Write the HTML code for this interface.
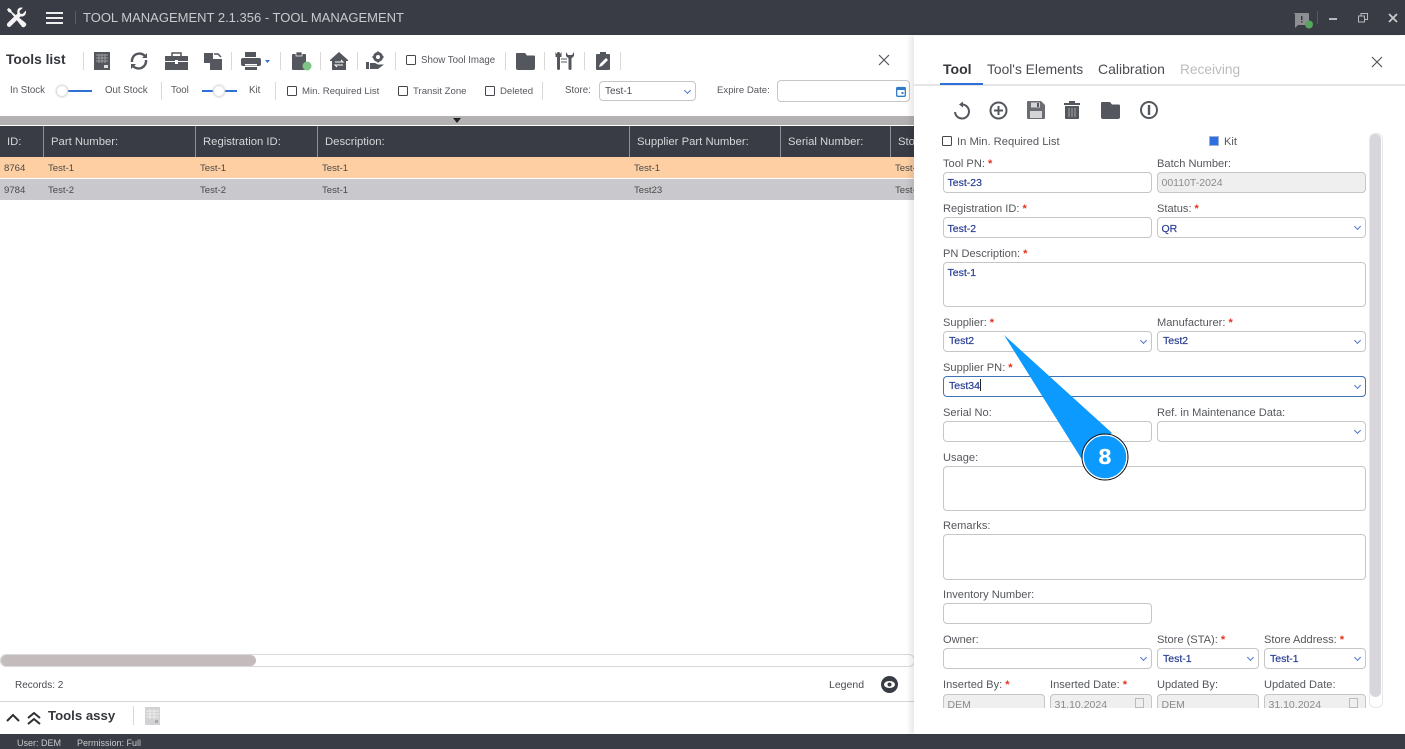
<!DOCTYPE html>
<html><head><meta charset="utf-8"><style>
*{box-sizing:border-box}
html,body{margin:0;padding:0}
body{width:1405px;height:749px;position:relative;overflow:hidden;background:#fff;font-family:"Liberation Sans",sans-serif;color:#4a4c52;font-size:10.5px}
.a{position:absolute;white-space:nowrap}
.h{position:absolute;white-space:nowrap;color:#d5d6d9;font-size:11.3px;top:136px;line-height:13px;padding-top:0}
.c{position:absolute;white-space:nowrap;color:#4a4a4a;font-size:9.6px}
.s{position:absolute;width:1px;background:#d9d9d9}
.cb{position:absolute;width:10px;height:10px;border:1.3px solid #44464c;border-radius:1.5px;background:#fff}
.l{position:absolute;white-space:nowrap;color:#55575c;font-size:11.1px;margin-top:1px}
.l b{color:#e8321e;font-weight:bold;margin-left:3px}
.t{font-size:9.7px;color:#55575c}
.f{position:absolute;border:1px solid #c6c6c6;border-radius:4px;background:#fff;color:#2a3f96;font-size:10.5px;padding:4px 0 0 3.5px;font-weight:normal;height:21px;white-space:nowrap;-webkit-text-stroke:.2px #2a3f96}
.f.dd{padding-left:5px;padding-top:3px}
.f.g{background:#efefef;color:#8b8b8b;-webkit-text-stroke:0}
.f.dd:after{content:"";position:absolute;right:5px;top:6px;width:4px;height:4px;border-right:1.4px solid #4f74c8;border-bottom:1.4px solid #4f74c8;transform:rotate(45deg)}
svg{position:absolute;overflow:visible}
.v{position:absolute;width:1px;background:#8f9196;top:126px;height:31px}
</style></head><body>
<!-- title bar -->
<div class="a" style="left:0;top:0;width:1405px;height:35px;background:#393c44"></div>
<svg style="left:6px;top:7px" width="21" height="21" viewBox="0 0 21 21"><path d="M2.500 1 L5 2.500 L6 5 L18.500 15 Q21 16.500 20 18.500 L18.500 20 Q16.500 21 15 18.500 L5 6 L2.500 5 L1 2.500Z" fill="#f4f4f4"/><path d="M20 3.500 L16.500 7 L14 6.500 L13.500 4 L17 .8 Q13 -.5 11.500 3 Q11 5.500 11.500 6.500 L1.500 16 Q.2 18 1.800 19.500 Q3.500 20.700 5 19 L14.500 9.500 Q20.500 10 20 3.500Z" fill="#f4f4f4"/></svg>
<div class="a" style="left:46px;top:12px;width:17px;height:2px;background:#eee"></div>
<div class="a" style="left:46px;top:17px;width:17px;height:2px;background:#eee"></div>
<div class="a" style="left:46px;top:22px;width:17px;height:2px;background:#eee"></div>
<div class="a" style="left:75px;top:11px;width:1px;height:13px;background:#5a5d64"></div>
<div class="a" style="left:83px;top:10px;color:#c9cace;font-size:13px">TOOL MANAGEMENT 2.1.356 - TOOL MANAGEMENT</div>
<svg style="left:1294px;top:13px" width="20" height="16" viewBox="0 0 20 16"><path d="M0 1 Q0 0 1 0 H14 Q15 0 15 1 V11 Q15 12 14 12 H4 L1 15 V1Z" fill="#8e8f93"/><rect x="7" y="3" width="1.500" height="4" fill="#393c44"/><rect x="7" y="8" width="1.500" height="1.500" fill="#393c44"/><circle cx="15" cy="11.500" r="4" fill="#56a55c"/></svg>
<div class="a" style="left:1317px;top:11px;width:1px;height:13px;background:#55585e"></div>
<div class="a" style="left:1329px;top:18px;width:8px;height:2px;background:#b8b9bc"></div>
<svg style="left:1358px;top:13px" width="10" height="10" viewBox="0 0 10 10" fill="none" stroke="#b8b9bc"><rect x=".5" y="3" width="6" height="6"/><path d="M3 3V.5H9.500V6.500H6.500"/></svg>
<svg style="left:1388px;top:13px" width="10" height="10" viewBox="0 0 10 10" stroke="#c8c9cc" stroke-width="1.800"><path d="M1 1L9 9M9 1L1 9"/></svg>

<!-- toolbar row 1 -->
<div class="a" style="left:6px;top:52px;font-size:13.8px;font-weight:bold;color:#34363c">Tools list</div>
<div class="s" style="left:83px;top:52px;height:18px"></div>
<svg style="left:94px;top:52px" width="16" height="18" viewBox="0 0 16 18"><rect width="16" height="18" fill="#55575e"/><path d="M2 3H14M2 6H14M2 9H14M5 2V11M8 2V11M11 2V11" stroke="#9a9ba0" stroke-width="1"/><rect x="10" y="13" width="4" height="3" fill="#ddd"/></svg>
<svg style="left:129px;top:51px" width="20" height="20" viewBox="0 0 20 20" fill="none" stroke="#55575e" stroke-width="2.400"><path d="M3 11A7.500 7.500 0 0 1 16 5"/><path d="M17 9A7.500 7.500 0 0 1 4 15"/><path d="M18 2V7H13Z" fill="#55575e" stroke="none"/><path d="M2 18V13H7Z" fill="#55575e" stroke="none"/></svg>
<svg style="left:165px;top:52px" width="23" height="18" viewBox="0 0 23 18"><path d="M7 4V1H16V4" fill="none" stroke="#55575e" stroke-width="1.500"/><rect y="4" width="23" height="5" fill="#55575e"/><rect y="10" width="23" height="8" fill="#55575e"/><rect x="10" y="8" width="3" height="4" fill="#fff"/></svg>
<svg style="left:204px;top:52px" width="18" height="18" viewBox="0 0 18 18" fill="#55575e"><rect y="1" width="9" height="10"/><rect x="6" y="7" width="12" height="11"/><path d="M10 2H14L17 5" fill="none" stroke="#55575e" stroke-width="1.500"/></svg>
<div class="s" style="left:231px;top:52px;height:18px"></div>
<svg style="left:241px;top:52px" width="28" height="18" viewBox="0 0 28 18"><rect x="4" y="0" width="11" height="5" fill="#55575e"/><rect y="6" width="20" height="8" rx="2" fill="#55575e"/><rect x="4" y="12" width="12" height="1.500" fill="#fff"/><rect x="4" y="15" width="12" height="3" fill="#55575e"/><path d="M24 8H29L26.500 11Z" fill="#2e6fd8"/></svg>
<div class="s" style="left:280px;top:52px;height:18px"></div>
<svg style="left:292px;top:51px" width="20" height="20" viewBox="0 0 20 20"><rect y="3" width="14" height="16" rx="1" fill="#55575e"/><rect x="4" y="1" width="6" height="4" fill="#55575e" stroke="#fff" stroke-width=".7"/><circle cx="15" cy="15" r="4.500" fill="#7dc486"/></svg>
<div class="s" style="left:320px;top:52px;height:18px"></div>
<svg style="left:330px;top:52px" width="18" height="18" viewBox="0 0 18 18"><path d="M9 0L18 8V9H16V18H2V9H0V8Z" fill="#55575e"/><path d="M5 10H13L11 8M13 13H5L7 15" stroke="#fff" stroke-width="1" fill="none"/></svg>
<div class="s" style="left:357px;top:52px;height:18px"></div>
<svg style="left:366px;top:51px" width="20" height="19" viewBox="0 0 20 19"><circle cx="12" cy="6" r="3.500" fill="none" stroke="#55575e" stroke-width="3"/><path d="M12 .5V2M12 10V11.500M6.500 6H8M16 6H17.500" stroke="#55575e" stroke-width="2"/><path d="M0 11H3V18H0ZM4 12H9L12 13.500H18L12 18H4Z" fill="#55575e"/></svg>
<div class="s" style="left:395px;top:52px;height:18px"></div>
<div class="cb" style="left:406px;top:55px"></div>
<div class="a t" style="left:421px;top:55px">Show Tool Image</div>
<div class="s" style="left:505px;top:52px;height:18px"></div>
<svg style="left:516px;top:52px" width="19" height="18" viewBox="0 0 19 18"><path d="M1 1H9L11 3.500H18Q19 3.500 19 5V7H0V2Q0 1 1 1Z" fill="#55575e"/><path d="M0 6.500H9L10.500 5H19V16Q19 18 17 18H2Q0 18 0 16Z" fill="#55575e"/></svg>
<div class="s" style="left:544px;top:52px;height:18px"></div>
<svg style="left:555px;top:52px" width="19" height="18" viewBox="0 0 19 18" fill="#55575e"><rect x="2" y="0" width="3" height="18" rx="1.500"/><path d="M0.500 0V5H6.500V0L5 2H2Z"/><rect x="13.500" y="6" width="3" height="12" rx="1.500"/><path d="M11 0V4L15 8L19 4V0L17 3H13Z"/><path d="M6 7H12M6 10H12" stroke="#55575e"/></svg>
<div class="s" style="left:584px;top:52px;height:18px"></div>
<svg style="left:596px;top:52px" width="14" height="18" viewBox="0 0 14 18"><rect y="2" width="14" height="16" rx="1" fill="#55575e"/><rect x="4" y="0" width="6" height="4" fill="#55575e"/><path d="M3 15L4 12L10 6L12 8L6 14Z" fill="#fff"/></svg>
<div class="s" style="left:620px;top:52px;height:18px"></div>
<svg style="left:879px;top:55px" width="10" height="10" viewBox="0 0 10 10" stroke="#55575c" stroke-width="1.200"><path d="M0 0L10 10M10 0L0 10"/></svg>

<!-- toolbar row 2 -->
<div class="a t" style="left:10px;top:85px">In Stock</div>
<div class="a" style="left:62px;top:90px;width:30px;height:2px;background:#2e6fd8"></div>
<div class="a" style="left:56px;top:85px;width:12px;height:12px;border-radius:50%;background:#fff;border:1px solid #e0e0e0;box-shadow:0 0 2px #ccc"></div>
<div class="a t" style="left:105px;top:85px">Out Stock</div>
<div class="s" style="left:161px;top:82px;height:18px"></div>
<div class="a t" style="left:171px;top:85px">Tool</div>
<div class="a" style="left:202px;top:90px;width:35px;height:2px;background:#2e6fd8"></div>
<div class="a" style="left:213px;top:85px;width:12px;height:12px;border-radius:50%;background:#fff;border:1px solid #e0e0e0;box-shadow:0 0 2px #ccc"></div>
<div class="a t" style="left:249px;top:85px">Kit</div>
<div class="s" style="left:275px;top:82px;height:18px"></div>
<div class="cb" style="left:287px;top:86px"></div><div class="a t" style="left:302px;top:86px;font-size:9.6px">Min. Required List</div>
<div class="cb" style="left:398px;top:86px"></div><div class="a t" style="left:413px;top:86px;font-size:9.6px">Transit Zone</div>
<div class="cb" style="left:485px;top:86px"></div><div class="a t" style="left:500px;top:86px;font-size:9.6px">Deleted</div>
<div class="s" style="left:542px;top:82px;height:18px"></div>
<div class="a t" style="left:565px;top:85px">Store:</div>
<div class="f dd" style="left:599px;top:81px;width:97px;height:20px;color:#4a4c52;font-size:10px;-webkit-text-stroke:0;padding-top:4px">Test-1</div>
<div class="a t" style="left:717px;top:85px;font-size:9.6px">Expire Date:</div>
<div class="f" style="left:777px;top:80px;width:133px;height:22px"></div>
<svg style="left:896px;top:86px" width="10" height="11" viewBox="0 0 10 11"><rect x=".7" y="1.500" width="8.600" height="8.800" rx="1" fill="#fff" stroke="#2e7bc8" stroke-width="1.300"/><rect x="1" y="1.500" width="8" height="2.500" fill="#2e7bc8"/><rect x="5.500" y="6" width="2" height="2" fill="#2e7bc8"/></svg>

<!-- grid -->
<div class="a" style="left:0;top:116px;width:914px;height:9px;background:#b3b1b1"></div>
<svg style="left:453px;top:118px" width="8" height="5" viewBox="0 0 8 5"><path d="M0 0H8L4 5Z" fill="#222"/></svg>
<div class="a" style="left:0;top:126px;width:914px;height:31px;background:#393c44"></div>
<div class="v" style="left:43px"></div><div class="v" style="left:195px"></div><div class="v" style="left:317px"></div><div class="v" style="left:629px"></div><div class="v" style="left:780px"></div><div class="v" style="left:890px"></div>
<div class="h" style="left:7px">ID:</div>
<div class="h" style="left:51px">Part Number:</div>
<div class="h" style="left:203px">Registration ID:</div>
<div class="h" style="left:325px">Description:</div>
<div class="h" style="left:637px">Supplier Part Number:</div>
<div class="h" style="left:788px">Serial Number:</div>
<div class="h" style="left:898px">Sto</div>
<div class="a" style="left:0;top:157px;width:914px;height:21px;background:#fdcfa3"></div>
<div class="a" style="left:0;top:179px;width:914px;height:21px;background:#c9c8cc"></div>
<div class="c" style="left:4px;top:163px">8764</div><div class="c" style="left:48px;top:163px">Test-1</div><div class="c" style="left:200px;top:163px">Test-1</div><div class="c" style="left:322px;top:163px">Test-1</div><div class="c" style="left:634px;top:163px">Test-1</div><div class="c" style="left:895px;top:163px">Test-</div>
<div class="c" style="left:4px;top:185px">9784</div><div class="c" style="left:48px;top:185px">Test-2</div><div class="c" style="left:200px;top:185px">Test-2</div><div class="c" style="left:322px;top:185px">Test-1</div><div class="c" style="left:634px;top:185px">Test23</div><div class="c" style="left:895px;top:185px">Test-</div>

<!-- bottom of list -->
<div class="a" style="left:0;top:654px;width:915px;height:13px;border:1px solid #d9d9d9;border-radius:6px"></div>
<div class="a" style="left:1px;top:655px;width:255px;height:11px;background:#c4bcbc;border-radius:6px"></div>
<div class="a" style="left:15px;top:680px;font-size:10px">Records: 2</div>
<div class="a" style="left:829px;top:679px;font-size:10.5px">Legend</div>
<svg style="left:881px;top:676px" width="17" height="17" viewBox="0 0 17 17"><circle cx="8.500" cy="8.500" r="8.500" fill="#393c44"/><ellipse cx="8.500" cy="8.500" rx="5.500" ry="3.500" fill="#fff"/><circle cx="8.500" cy="8.500" r="2" fill="#393c44"/></svg>
<div class="a" style="left:0;top:701px;width:914px;height:1px;background:#d5d5d5"></div>
<svg style="left:6px;top:711px" width="36" height="15" viewBox="0 0 36 15" fill="none" stroke="#2c2e33" stroke-width="2"><path d="M1 10L7 4L13 10"/><path d="M22 7L28 2L34 7M22 13L28 8L34 13"/></svg>
<div class="a" style="left:48px;top:708px;font-size:13.2px;font-weight:bold;color:#34363c">Tools assy</div>
<div class="s" style="left:133px;top:706px;height:19px"></div>
<svg style="left:145px;top:707px" width="15" height="18" viewBox="0 0 15 18"><rect width="15" height="18" fill="#d2d2d4"/><path d="M1 4H14M1 7H14M1 10H14M5 2V12M9 2V12" stroke="#eee"/><rect x="10" y="13" width="3" height="3" fill="#aaa"/></svg>

<!-- status bar -->
<div class="a" style="left:0;top:734px;width:1405px;height:15px;background:#393c44"></div>
<div class="a" style="left:17px;top:738px;font-size:9px;color:#c9cace">User: DEM</div>
<div class="a" style="left:77px;top:738px;font-size:9px;color:#c9cace">Permission: Full</div>

<!-- right panel -->
<div class="a" style="left:914px;top:36px;width:491px;height:698px;background:#fff;box-shadow:-4px 0 5px rgba(0,0,0,.09)"></div>
<div class="a" style="left:943px;top:61px;font-size:14px;font-weight:bold;color:#34363c">Tool</div>
<div class="a" style="left:987px;top:62px;font-size:13.8px;color:#4a4c52">Tool's Elements</div>
<div class="a" style="left:1098px;top:61px;font-size:14px;color:#4a4c52">Calibration</div>
<div class="a" style="left:1180px;top:62px;font-size:13.7px;color:#bcbcbc">Receiving</div>
<div class="a" style="left:914px;top:84px;width:491px;height:2px;background:#e6e6e6"></div>
<div class="a" style="left:940px;top:83px;width:43px;height:2px;background:#2e6fd8"></div>
<svg style="left:1372px;top:57px" width="10" height="10" viewBox="0 0 10 10" stroke="#55575c" stroke-width="1.200"><path d="M0 0L10 10M10 0L0 10"/></svg>

<svg style="left:952px;top:101px" width="19" height="19" viewBox="0 0 19 19" fill="none" stroke="#55575e" stroke-width="2"><path d="M10 3.500A7 7 0 1 1 3 11"/><path d="M11 .5L7 3.500L11 6.500Z" fill="#55575e" stroke="none"/></svg>
<svg style="left:989px;top:101px" width="19" height="19" viewBox="0 0 19 19" fill="none" stroke="#55575e" stroke-width="2"><circle cx="9.500" cy="9.500" r="8"/><path d="M5 9.500H14M9.500 5V14"/></svg>
<svg style="left:1027px;top:101px" width="18" height="18" viewBox="0 0 18 18"><path d="M1 0H14L18 4V17Q18 18 17 18H1Q0 18 0 17V1Q0 0 1 0Z" fill="#6a6c72"/><rect x="4" y="1.500" width="9" height="5" fill="#d4d4d6"/><rect x="10" y="2" width="2" height="4" fill="#55575e"/><rect x="3" y="10" width="12" height="7" fill="#d4d4d6"/></svg>
<svg style="left:1064px;top:101px" width="16" height="18" viewBox="0 0 16 18" fill="#55575e"><rect y="2" width="16" height="2"/><rect x="5" y="0" width="6" height="3"/><path d="M1 5H15V17Q15 18 14 18H2Q1 18 1 17Z"/><path d="M5 7V16M8 7V16M11 7V16" stroke="#aaa"/></svg>
<svg style="left:1101px;top:101px" width="19" height="18" viewBox="0 0 19 18"><path d="M1 1H9L11 3.500H18Q19 3.500 19 5V7H0V2Q0 1 1 1Z" fill="#55575e"/><path d="M0 6.500H9L10.500 5H19V16Q19 18 17 18H2Q0 18 0 16Z" fill="#55575e"/></svg>
<svg style="left:1140px;top:101px" width="18" height="18" viewBox="0 0 18 18" fill="none" stroke="#55575e" stroke-width="2"><circle cx="9" cy="9" r="8"/><path d="M9 4V14" stroke-width="2.400"/></svg>

<div class="cb" style="left:942px;top:136px"></div>
<div class="l" style="left:957px;top:135px;font-size:11.2px">In Min. Required List</div>
<div class="a" style="left:1209px;top:136px;width:10px;height:10px;background:#2e6fe0;border:1.500px solid #9fb3d8"></div>
<div class="l" style="left:1224px;top:135px">Kit</div>

<!-- scrollbar -->
<div class="a" style="left:1369px;top:133px;width:14px;height:575px;border:1px solid #e8e8e8;border-radius:6px"></div>
<div class="a" style="left:1370px;top:134px;width:11px;height:563px;background:#d8d6da;border-radius:5px"></div>

<div class="l" style="left:943px;top:157px">Tool PN:<b>*</b></div><div class="l" style="left:1157px;top:157px">Batch Number:</div>
<div class="f" style="left:943px;top:172px;width:209px">Test-23</div><div class="f g" style="left:1157px;top:172px;width:209px">00110T-2024</div>
<div class="l" style="left:943px;top:202px">Registration ID:<b>*</b></div><div class="l" style="left:1157px;top:202px">Status:<b>*</b></div>
<div class="f" style="left:943px;top:217px;width:209px;padding-top:5px">Test-2</div><div class="f dd" style="left:1157px;top:217px;width:209px;padding:5px 0 0 3.500px">QR</div>
<div class="l" style="left:943px;top:247px">PN Description:<b>*</b></div>
<div class="f" style="left:943px;top:262px;width:423px;height:45px">Test-1</div>
<div class="l" style="left:943px;top:316px">Supplier:<b>*</b></div><div class="l" style="left:1157px;top:316px">Manufacturer:<b>*</b></div>
<div class="f dd" style="left:943px;top:331px;width:209px">Test2</div><div class="f dd" style="left:1157px;top:331px;width:209px">Test2</div>
<div class="l" style="left:943px;top:361px">Supplier PN:<b>*</b></div>
<div class="f dd" style="left:943px;top:376px;width:423px;border-color:#3f73b8;padding-top:2px">Test34<span style="display:inline-block;width:1px;height:12px;background:#222;vertical-align:-2px"></span></div>
<div class="l" style="left:943px;top:406px">Serial No:</div><div class="l" style="left:1157px;top:406px">Ref. in Maintenance Data:</div>
<div class="f" style="left:943px;top:421px;width:209px"></div><div class="f dd" style="left:1157px;top:421px;width:209px"></div>
<div class="l" style="left:943px;top:451px">Usage:</div>
<div class="f" style="left:943px;top:466px;width:423px;height:45px"></div>
<div class="l" style="left:943px;top:519px">Remarks:</div>
<div class="f" style="left:943px;top:534px;width:423px;height:46px"></div>
<div class="l" style="left:943px;top:588px">Inventory Number:</div>
<div class="f" style="left:943px;top:603px;width:209px"></div>
<div class="l" style="left:943px;top:633px">Owner:</div><div class="l" style="left:1157px;top:633px">Store (STA):<b>*</b></div><div class="l" style="left:1264px;top:633px">Store Address:<b>*</b></div>
<div class="f dd" style="left:943px;top:648px;width:209px"></div><div class="f dd" style="left:1157px;top:648px;width:102px;padding-top:4px">Test-1</div><div class="f dd" style="left:1264px;top:648px;width:102px;padding-top:4px">Test-1</div>
<div class="l" style="left:943px;top:678px">Inserted By:<b>*</b></div><div class="l" style="left:1050px;top:678px">Inserted Date:<b>*</b></div><div class="l" style="left:1157px;top:678px">Updated By:</div><div class="l" style="left:1264px;top:678px">Updated Date:</div>
<div class="a" style="left:943px;top:694px;width:423px;height:14px;overflow:hidden">
<div class="f g" style="left:0;top:0;width:102px">DEM</div><div class="f g" style="left:107px;top:0;width:102px">31.10.2024</div><div class="f g" style="left:214px;top:0;width:102px">DEM</div><div class="f g" style="left:321px;top:0;width:102px">31.10.2024</div>
<div class="a" style="left:192px;top:4px;width:9px;height:10px;border:1.500px solid #bbb"></div><div class="a" style="left:406px;top:4px;width:9px;height:10px;border:1.500px solid #bbb"></div>
</div>

<!-- callout -->
<svg style="left:1000px;top:330px" width="135" height="155" viewBox="0 0 135 155"><path d="M4 5L112 103L81 128Z" fill="#0c9aff"/><circle cx="105" cy="127" r="22.500" fill="#0c9aff"/><circle cx="105" cy="127" r="23" fill="none" stroke="#111" stroke-width="1"/><circle cx="105" cy="127" r="21.800" fill="none" stroke="#fff" stroke-width="1.200"/></svg>
<div class="a" style="left:1095px;top:444px;width:20px;text-align:center;font-size:20px;font-weight:bold;color:#fff;font-family:'DejaVu Sans',sans-serif;line-height:26px">8</div>
</body></html>
